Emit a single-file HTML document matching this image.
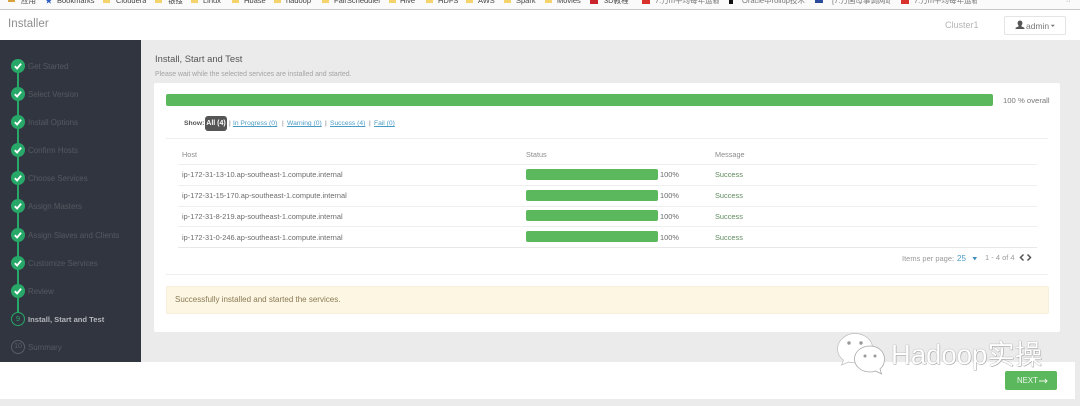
<!DOCTYPE html>
<html>
<head>
<meta charset="utf-8">
<style>
html,body{margin:0;padding:0;width:1080px;height:406px;overflow:hidden;background:#ebebeb;font-family:"Liberation Sans","Noto Sans CJK SC",sans-serif;}
.a{position:absolute;white-space:nowrap;}
.bm{font-size:7.500px;color:#444;top:-5px;line-height:12px;overflow:hidden;}
.fd{position:absolute;top:0;width:7px;height:3px;background:#f4d36b;}
.st{position:absolute;left:28px;font-size:7.900px;color:#55595f;line-height:12px;white-space:nowrap;}
.ck{position:absolute;left:11px;width:14px;height:14px;border-radius:50%;background:#27a868;}
.ck svg{position:absolute;left:0;top:0;}
.bar{position:absolute;background:#5cb85c;border-radius:2px;}
.t{position:absolute;font-size:7.400px;color:#6b6b6b;line-height:12px;white-space:nowrap;}
.hl{position:absolute;height:1px;background:#eeeeee;}
.lk{color:#4a9bc4;text-decoration:underline;}
.sh{font-size:6.700px;top:118px;}
</style>
</head>
<body>
<div class="a" style="left:0;top:0;width:1080px;height:406px;overflow:hidden;filter:blur(.35px);">

<!-- bookmark bar -->
<div class="a" style="left:0;top:0;width:1080px;height:9px;background:#fafafa;"></div>
<div class="a" style="left:0;top:9px;width:1080px;height:1px;background:#c8c8c8;"></div>
<div class="fd" style="left:8px;width:7px;height:2px;background:#d8a33a;"></div>
<div class="a bm" style="left:21px;">应用</div>
<div class="a bm" style="left:45px;color:#2a5bc0;">★</div>
<div class="a bm" style="left:57px;">Bookmarks</div>
<div class="fd" style="left:103px;"></div><div class="a bm" style="left:116px;">Cloudera</div>
<div class="fd" style="left:155px;"></div><div class="a bm" style="left:168px;">银搜</div>
<div class="fd" style="left:191px;"></div><div class="a bm" style="left:203px;">Linux</div>
<div class="fd" style="left:232px;"></div><div class="a bm" style="left:244px;">Hbase</div>
<div class="fd" style="left:274px;"></div><div class="a bm" style="left:286px;">hadoop</div>
<div class="fd" style="left:322px;"></div><div class="a bm" style="left:334px;">FairScheduler</div>
<div class="fd" style="left:389px;"></div><div class="a bm" style="left:400px;">Hive</div>
<div class="fd" style="left:426px;"></div><div class="a bm" style="left:438px;">HDFS</div>
<div class="fd" style="left:466px;"></div><div class="a bm" style="left:478px;">AWS</div>
<div class="fd" style="left:504px;"></div><div class="a bm" style="left:516px;">Spark</div>
<div class="fd" style="left:545px;"></div><div class="a bm" style="left:557px;">Movies</div>
<div class="fd" style="left:590px;width:8px;height:4px;background:#c9252c;"></div><div class="a bm" style="left:604px;">3D教程</div>
<div class="fd" style="left:642px;width:8px;height:4px;background:#d8322c;"></div><div class="a bm" style="left:655px;width:64px;color:#777;">7.万m平均每年运输</div>
<div class="fd" style="left:729px;width:4px;height:4px;background:#111;"></div><div class="a bm" style="left:742px;width:63px;color:#777;">Oracle中rollup技术</div>
<div class="fd" style="left:815px;width:8px;height:3px;background:#2c4a9c;"></div><div class="a bm" style="left:832px;width:58px;color:#777;">[7.万国母事调网站</div>
<div class="fd" style="left:901px;width:8px;height:4px;background:#d8322c;"></div><div class="a bm" style="left:914px;width:63px;color:#777;">7.万m平均每年运输</div>
<div class="a" style="left:1066px;top:0;font-size:7px;line-height:3px;color:#777;">··</div>

<!-- header -->
<div class="a" style="left:0;top:10px;width:1080px;height:30px;background:#fff;"></div>
<div class="a" style="left:8px;top:17px;font-size:11.500px;line-height:15px;color:#8e8e8e;letter-spacing:.05px;">Installer</div>
<div class="a" style="left:945px;top:19px;font-size:9px;line-height:12px;color:#b5b5b5;">Cluster1</div>
<div class="a" style="left:1004px;top:16px;width:62px;height:19px;box-sizing:border-box;background:#fff;border:1px solid #e4e4e4;border-radius:2px;"></div>
<svg class="a" style="left:1015px;top:20px;" width="10" height="10"><path d="M5 0.500a2.400 2.400 0 0 1 2.400 2.600c0 1-.5 1.900-1 2.500v.8l3 1.300v1.300H.6V7.700l3-1.300v-.8c-.5-.6-1-1.500-1-2.500A2.400 2.400 0 0 1 5 .5z" fill="#555"/></svg>
<svg class="a" style="left:1050px;top:24px;" width="6" height="4"><path d="M.8.800h4L2.800 3z" fill="#777"/></svg>
<div class="a" style="left:1026px;top:20px;font-size:8.500px;line-height:12px;color:#777;">admin</div>

<!-- sidebar -->
<div class="a" style="left:0;top:40px;width:141px;height:322px;background:#313540;"></div>
<div class="a" style="left:17px;top:66px;width:2px;height:253px;background:#27a868;"></div>

<div class="ck" style="top:59px;"><svg width="14" height="14"><path d="M3.800 7.200l2.300 2.300 4-4.800" fill="none" stroke="#fff" stroke-width="1.900"/></svg></div>
<div class="ck" style="top:87px;"><svg width="14" height="14"><path d="M3.800 7.200l2.300 2.300 4-4.800" fill="none" stroke="#fff" stroke-width="1.900"/></svg></div>
<div class="ck" style="top:115px;"><svg width="14" height="14"><path d="M3.800 7.200l2.300 2.300 4-4.800" fill="none" stroke="#fff" stroke-width="1.900"/></svg></div>
<div class="ck" style="top:143px;"><svg width="14" height="14"><path d="M3.800 7.200l2.300 2.300 4-4.800" fill="none" stroke="#fff" stroke-width="1.900"/></svg></div>
<div class="ck" style="top:171px;"><svg width="14" height="14"><path d="M3.800 7.200l2.300 2.300 4-4.800" fill="none" stroke="#fff" stroke-width="1.900"/></svg></div>
<div class="ck" style="top:199px;"><svg width="14" height="14"><path d="M3.800 7.200l2.300 2.300 4-4.800" fill="none" stroke="#fff" stroke-width="1.900"/></svg></div>
<div class="ck" style="top:228px;"><svg width="14" height="14"><path d="M3.800 7.200l2.300 2.300 4-4.800" fill="none" stroke="#fff" stroke-width="1.900"/></svg></div>
<div class="ck" style="top:256px;"><svg width="14" height="14"><path d="M3.800 7.200l2.300 2.300 4-4.800" fill="none" stroke="#fff" stroke-width="1.900"/></svg></div>
<div class="ck" style="top:284px;"><svg width="14" height="14"><path d="M3.800 7.200l2.300 2.300 4-4.800" fill="none" stroke="#fff" stroke-width="1.900"/></svg></div>

<div class="a" style="left:11px;top:312px;width:14px;height:14px;box-sizing:border-box;border:1px solid #27a868;border-radius:50%;background:#313540;color:#27a868;font-size:7.500px;line-height:12px;text-align:center;">9</div>
<div class="a" style="left:11px;top:340px;width:14px;height:14px;box-sizing:border-box;border:1px solid #5a5e66;border-radius:50%;background:#313540;color:#5a5e66;font-size:7px;line-height:12px;text-align:center;">10</div>

<div class="st" style="top:61px;">Get Started</div>
<div class="st" style="top:89px;">Select Version</div>
<div class="st" style="top:117px;">Install Options</div>
<div class="st" style="top:145px;">Confirm Hosts</div>
<div class="st" style="top:173px;">Choose Services</div>
<div class="st" style="top:201px;">Assign Masters</div>
<div class="st" style="top:230px;">Assign Slaves and Clients</div>
<div class="st" style="top:258px;">Customize Services</div>
<div class="st" style="top:286px;">Review</div>
<div class="st" style="top:314px;color:#b4b6ba;font-weight:bold;font-size:7.600px;">Install, Start and Test</div>
<div class="st" style="top:342px;">Summary</div>

<!-- title -->
<div class="a" style="left:155px;top:52px;font-size:9.400px;line-height:13px;color:#555;">Install, Start and Test</div>
<div class="a" style="left:155px;top:69px;font-size:6.900px;line-height:11px;color:#a3a3a3;">Please wait while the selected services are installed and started.</div>

<!-- card -->
<div class="a" style="left:154px;top:83px;width:906px;height:249px;background:#fff;border-radius:2px;"></div>
<div class="bar" style="left:166px;top:94px;width:827px;height:12px;"></div>
<div class="t" style="left:1003px;top:95px;color:#777;font-size:7.700px;">100 % overall</div>

<div class="t" style="left:184px;top:118px;font-size:6.800px;color:#555;font-weight:bold;">Show:</div>
<div class="a" style="left:205px;top:116px;width:22px;height:15px;background:#555;border-radius:3px;color:#fff;font-size:7px;line-height:15px;text-align:center;font-weight:bold;">All (4)</div>
<div class="t sh" style="left:229px;color:#777;">|</div>
<div class="t lk sh" style="left:233px;">In Progress (0)</div>
<div class="t sh" style="left:282px;color:#777;">|</div>
<div class="t lk sh" style="left:287px;">Warning (0)</div>
<div class="t sh" style="left:325px;color:#777;">|</div>
<div class="t lk sh" style="left:330px;">Success (4)</div>
<div class="t sh" style="left:369px;color:#777;">|</div>
<div class="t lk sh" style="left:374px;">Fail (0)</div>

<div class="hl" style="left:166px;top:138px;width:882px;"></div>

<!-- table -->
<div class="t" style="left:182px;top:149px;font-size:7.300px;color:#8c8c8c;">Host</div>
<div class="t" style="left:526px;top:149px;font-size:7.300px;color:#8c8c8c;">Status</div>
<div class="t" style="left:715px;top:149px;font-size:7.300px;color:#8c8c8c;">Message</div>
<div class="hl" style="left:178px;top:164px;width:859px;"></div>
<div class="hl" style="left:178px;top:185px;width:859px;"></div>
<div class="hl" style="left:178px;top:206px;width:859px;"></div>
<div class="hl" style="left:178px;top:226px;width:859px;"></div>
<div class="hl" style="left:178px;top:247px;width:859px;background:#e8e8e8;"></div>

<div class="t" style="left:182px;top:169px;">ip-172-31-13-10.ap-southeast-1.compute.internal</div>
<div class="bar" style="left:526px;top:169px;width:132px;height:11px;"></div>
<div class="t" style="left:660px;top:169px;">100%</div>
<div class="t" style="left:715px;top:169px;color:#5f8a5f;">Success</div>

<div class="t" style="left:182px;top:190px;">ip-172-31-15-170.ap-southeast-1.compute.internal</div>
<div class="bar" style="left:526px;top:190px;width:132px;height:11px;"></div>
<div class="t" style="left:660px;top:190px;">100%</div>
<div class="t" style="left:715px;top:190px;color:#5f8a5f;">Success</div>

<div class="t" style="left:182px;top:211px;">ip-172-31-8-219.ap-southeast-1.compute.internal</div>
<div class="bar" style="left:526px;top:210px;width:132px;height:11px;"></div>
<div class="t" style="left:660px;top:211px;">100%</div>
<div class="t" style="left:715px;top:211px;color:#5f8a5f;">Success</div>

<div class="t" style="left:182px;top:232px;">ip-172-31-0-246.ap-southeast-1.compute.internal</div>
<div class="bar" style="left:526px;top:231px;width:132px;height:11px;"></div>
<div class="t" style="left:660px;top:232px;">100%</div>
<div class="t" style="left:715px;top:232px;color:#5f8a5f;">Success</div>

<!-- pagination -->
<div class="t" style="left:902px;top:253px;font-size:7.500px;color:#9a9a9a;">Items per page:</div>
<div class="t" style="left:957px;top:253px;font-size:8px;color:#4a9bc4;">25</div>
<svg class="a" style="left:972px;top:256px;" width="6" height="6"><path d="M.5 1h4.500l-2.250 3.500z" fill="#3d8fc0"/></svg>
<div class="t" style="left:985px;top:252px;font-size:7.500px;color:#9a9a9a;">1 - 4 of 4</div>
<svg class="a" style="left:1019px;top:253px;" width="13" height="10"><path d="M4.500 1.500L1.500 4.500l3 3M8.500 1.500l3 3-3 3" fill="none" stroke="#555" stroke-width="1.500"/></svg>

<div class="hl" style="left:166px;top:274px;width:882px;"></div>

<!-- alert -->
<div class="a" style="left:166px;top:286px;width:883px;height:28px;box-sizing:border-box;background:#fcf6e3;border:1px solid #f6efdc;border-radius:2px;"></div>
<div class="a" style="left:175px;top:294px;font-size:8px;line-height:12px;color:#8a7a55;">Successfully installed and started the services.</div>

<!-- footer -->
<div class="a" style="left:0;top:362px;width:1075px;height:37px;background:#fff;"></div>
<div class="a" style="left:1005px;top:371px;width:52px;height:19px;background:#5cb85c;border-radius:2px;"></div>
<div class="a" style="left:1017px;top:375px;font-size:7.800px;line-height:12px;color:#eef8ee;">NEXT</div>
<svg class="a" style="left:1039px;top:378px;" width="9" height="7"><path d="M0 3h7.500M6 1l2 2-2 2" fill="none" stroke="#eef8ee" stroke-width=".9"/></svg>

<!-- watermark -->
<svg class="a" style="left:836px;top:332px;" width="52" height="48">
<path d="M19 1.500C9 1.500 1.500 9 1.500 17c0 5 3 9 6 11l-2 5 7-3c2 .6 4 .8 6 .8 1 0 2 0 3-.2-.5-1.500-1-3-1-4.500 0-7 7-12 15-12h1C35 7 28 1.500 19 1.500z" fill="#fff" stroke="#bbb" stroke-width=".7"/>
<circle cx="13" cy="11" r="1.700" fill="#999"/><circle cx="25" cy="11" r="1.700" fill="#999"/>
<path d="M34 14c-9 0-15.500 6-15.500 13s6.500 13 15.500 13c2 0 4-.3 5.500-1l6 3-1.500-5c3-2.500 4.500-6 4.500-10 0-7-6-13-14.500-13z" fill="#fff" stroke="#a8a8a8" stroke-width=".8"/>
<circle cx="29" cy="24" r="1.500" fill="#999"/><circle cx="39" cy="24" r="1.500" fill="#999"/>
</svg>
<div class="a" style="left:891px;top:339px;font-size:27.500px;line-height:32px;color:#fff;text-shadow:0 0 1px #777,.5px .5px 0 #aaa;">Hadoop实操</div>

</div>
</body>
</html>
